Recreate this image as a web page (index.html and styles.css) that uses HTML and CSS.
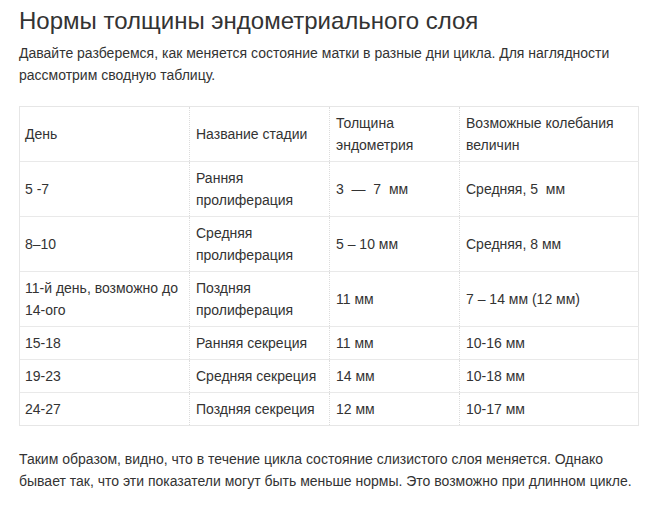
FILE: index.html
```html
<!DOCTYPE html>
<html lang="ru">
<head>
<meta charset="utf-8">
<link rel="stylesheet" href="styles.css">
</head>
<body>
<div class="article">
  <h2 class="title">Нормы толщины эндометриального слоя</h2>
  <p class="text">Давайте разберемся, как меняется состояние матки в разные дни цикла. Для наглядности рассмотрим сводную таблицу.</p>
  <table class="norms">
    <colgroup>
      <col class="c1"><col class="c2"><col class="c3"><col class="c4">
    </colgroup>
    <tbody>
      <tr class="r2"><td>День</td><td>Название стадии</td><td>Толщина эндометрия</td><td>Возможные колебания величин</td></tr>
      <tr class="r2"><td>5 -7</td><td>Ранняя пролиферация</td><td>3&nbsp; —&nbsp; 7&nbsp; мм</td><td>Средняя, 5&nbsp; мм</td></tr>
      <tr class="r2"><td>8–10</td><td>Средняя пролиферация</td><td>5 – 10 мм</td><td>Средняя, 8 мм</td></tr>
      <tr class="r2"><td>11-й день, возможно до 14-ого</td><td>Поздняя пролиферация</td><td>11 мм</td><td>7 – 14 мм (12 мм)</td></tr>
      <tr><td>15-18</td><td>Ранняя секреция</td><td>11 мм</td><td>10-16 мм</td></tr>
      <tr><td>19-23</td><td>Средняя секреция</td><td>14 мм</td><td>10-18 мм</td></tr>
      <tr><td>24-27</td><td>Поздняя секреция</td><td>12 мм</td><td>10-17 мм</td></tr>
    </tbody>
  </table>
  <p class="text after">Таким образом, видно, что в течение цикла состояние слизистого слоя меняется. Однако бывает так, что эти показатели могут быть меньше нормы. Это возможно при длинном цикле.</p>
</div>
</body>
</html>
```
FILE: styles.css
```css
html, body {
  margin: 0;
  padding: 0;
  background: #fff;
}
body {
  font-family: "Liberation Sans", Arial, sans-serif;
  color: #333;
}
.article {
  padding: 6px 0 0 19px;
  width: 620px;
}
.title {
  margin: 0;
  font-size: 24px;
  font-weight: normal;
  line-height: 30px;
  color: #333;
}
.text {
  margin: 6px 0 0 0;
  font-size: 14px;
  line-height: 22px;
}
.norms {
  margin-top: 20px;
  width: 619px;
  table-layout: fixed;
  border-collapse: collapse;
  border: 1px solid #e6e6e6;
  font-size: 14px;
  line-height: 22px;
  color: #333;
}
.c1 { width: 170px; }
.c2 { width: 140px; }
.c3 { width: 130px; }
.c4 { width: 179px; }
.norms td {
  padding: 5px 5px 5px 6px;
  border-top: 1px solid #e9e9e9;
  border-left: 1px dotted #dcdcdc;
  vertical-align: middle;
}
.norms td:first-child {
  border-left: 1px solid #e6e6e6;
  padding-left: 5px;
}
.norms tr:first-child td {
  border-top: 1px solid #e6e6e6;
}
.after {
  margin-top: 22px;
}
```
